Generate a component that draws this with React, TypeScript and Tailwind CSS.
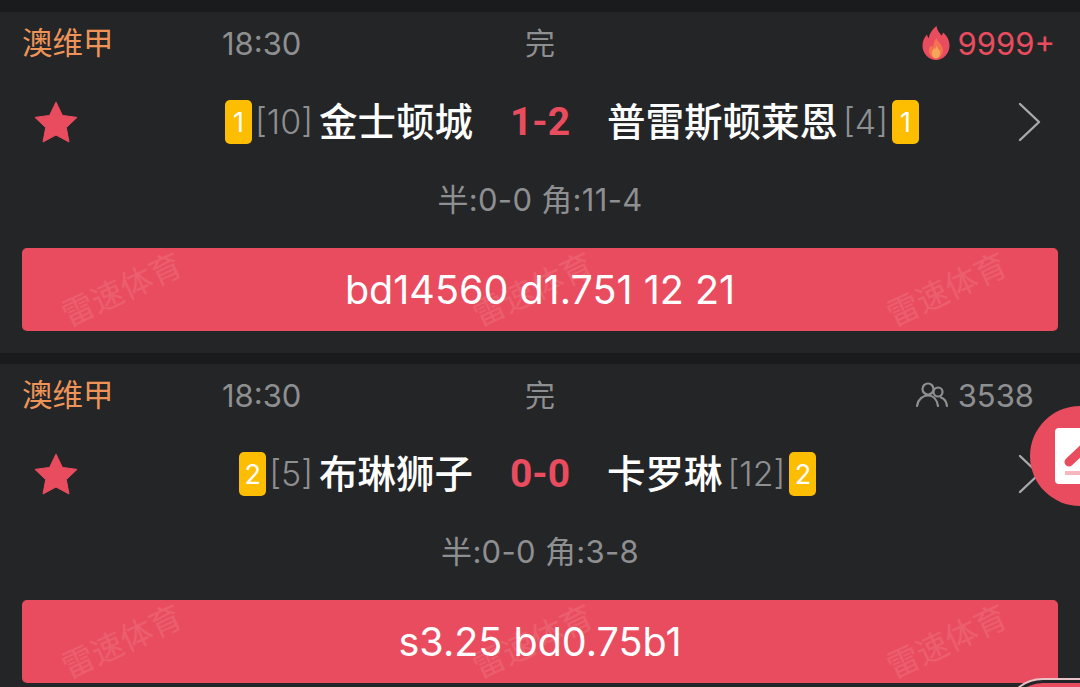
const cjk = "font-['Inter','Noto_Sans_CJK_SC',sans-serif]";

type Match = {
  tag: string;
  heat: "hot" | "people";
  heatText: string;
  homeCards: string;
  homeRank: string;
  home: string;
  score: string;
  away: string;
  awayRank: string;
  awayCards: string;
  stats: string;
  tip: string;
};

const matches: Match[] = [
  {
    tag: "澳维甲",
    heat: "hot",
    heatText: "9999+",
    homeCards: "1",
    homeRank: "[10]",
    home: "金士顿城",
    score: "1-2",
    away: "普雷斯顿莱恩",
    awayRank: "[4]",
    awayCards: "1",
    stats: "半:0-0 角:11-4",
    tip: "bd14560 d1.751 12 21",
  },
  {
    tag: "澳维甲",
    heat: "people",
    heatText: "3538",
    homeCards: "2",
    homeRank: "[5]",
    home: "布琳狮子",
    score: "0-0",
    away: "卡罗琳",
    awayRank: "[12]",
    awayCards: "2",
    stats: "半:0-0 角:3-8",
    tip: "s3.25 bd0.75b1",
  },
];

function Flame() {
  return (
    <svg width="28" height="34" viewBox="0 0 28 34" className="shrink-0">
      <path
        d="M14.5 0c.6 4.5 3 7 5 9.500.8-.8 1.300-1.800 1.500-3 3.800 3 6.500 7.500 6.500 13 0 8-6 14.500-13.500 14.500S.5 27.500.5 19.500c0-4.500 1.800-8 4.500-11 .3 1.500.8 2.800 1.800 3.800C7.500 7.500 10.500 3 14.500 0z"
        fill="#e94c5e"
      />
      <path
        d="M14.500 12c.8 3 3 4.500 5 7.500 1.500 2.200 2 4.500 1.200 7-1 3.500-3.500 6-6.700 6s-5.800-2.500-6.800-5.800c-.8-2.700 0-5.200 2-7.400.3 1 .8 1.800 1.800 2.200.1-3.500 1.300-6.800 3.500-9.500z"
        fill="#f4724f"
      />
      <path
        d="M14.500 20c.8 2 2.200 3 3.200 4.800 1.200 2.500-.5 7.700-3.700 7.700s-5-4.500-3.800-7.200c.5-1.200 1.300-2 1.800-3 .5.500 1 .8 1.300 1 .2-1 .6-2.200 1.200-3.300z"
        fill="#f7a45c"
      />
    </svg>
  );
}

function People() {
  return (
    <svg width="32" height="26" viewBox="0 0 32 26" fill="none" stroke="#8e8f91" strokeWidth="2.200" strokeLinecap="round" className="shrink-0">
      <circle cx="12" cy="7" r="5.500" />
      <circle cx="22" cy="10" r="4.500" />
      <path d="M1 24C2 17 7 13.500 12 13.500c5 0 9 4 10 10.500" />
      <path d="M25 15.500c3 1 5.500 4.500 6 8.500" />
    </svg>
  );
}

function Star() {
  return (
    <svg width="44" height="42" viewBox="0 0 44 42" className="shrink-0">
      <path
        d="M22 1l6.400 13.400 14.600 2-10.700 10.200 2.700 14.400L22 34l-13 7 2.700-14.400L1 16.400l14.600-2z"
        fill="#e94c5e"
        stroke="#e94c5e"
        strokeLinejoin="round"
      />
    </svg>
  );
}

function Chevron() {
  return (
    <svg width="24" height="40" viewBox="0 0 24 40" fill="none" stroke="#a9aaab" strokeWidth="2.400" strokeLinecap="round" strokeLinejoin="round" className="shrink-0">
      <path d="M3 2l19 18L3 38" />
    </svg>
  );
}

function CardBadge({ value }: { value: string }) {
  return (
    <span className="flex h-[44px] w-[27px] shrink-0 items-center justify-center rounded-[5px] bg-[#fdbd00] text-[27px] leading-none text-white">
      {value}
    </span>
  );
}

function Watermark({ className }: { className: string }) {
  return (
    <span className={`absolute top-[26px] rotate-[-25deg] whitespace-nowrap text-[32px] leading-none text-white/10 ${className}`}>
      雷速体育
    </span>
  );
}

function MatchRow({ m }: { m: Match }) {
  return (
    <section className="flex h-[341px] shrink-0 flex-col bg-[#242527] px-[22px]">
      {/* top line: league, kick off, state, heat */}
      <div className="grid h-[62px] shrink-0 grid-cols-[200px_303px_1fr_auto] items-center text-[31px] leading-none">
        <span className="text-[30.5px] text-[#ee9458]">{m.tag}</span>
        <span className="text-[#8e8f91]">18:30</span>
        <span className="text-[30px] text-[#8e8f91]">完</span>
        <span className={`flex items-center ${m.heat === "hot" ? "gap-[8px] pr-[3px] text-[#e94c5e]" : "gap-[10px] pr-[24px] text-[#8e8f91]"}`}>
          {m.heat === "hot" ? <Flame /> : <People />}
          {m.heatText}
        </span>
      </div>

      {/* teams and score */}
      <div className="flex h-[96px] shrink-0 items-center">
        <div className="flex w-[451px] shrink-0 items-center pl-[12px]">
          <Star />
          <span className="ml-auto mr-[3px]">
            <CardBadge value={m.homeCards} />
          </span>
          <span className="mr-[6px] text-[34px] font-light leading-none text-[#8e8f91]">{m.homeRank}</span>
          <span className="text-[38.5px] font-medium leading-none text-white">{m.home}</span>
        </div>
        <span className="w-[134px] shrink-0 text-center font-['Roboto'] text-[39px] font-bold leading-none text-[#e94c5e]">{m.score}</span>
        <div className="flex w-[451px] shrink-0 items-center pr-[17px]">
          <span className="mr-[5px] text-[38.5px] font-medium leading-none text-white">{m.away}</span>
          <span className="mr-[4px] text-[34px] font-light leading-none text-[#8e8f91]">{m.awayRank}</span>
          <CardBadge value={m.awayCards} />
          <span className="ml-auto">
            <Chevron />
          </span>
        </div>
      </div>

      {/* half time and corners */}
      <div className="flex h-[58px] shrink-0 items-center justify-center text-[31px] leading-none tracking-[0.3px] text-[#8e8f91]">
        {m.stats}
      </div>

      {/* tip banner */}
      <div className="relative mt-[20px] flex h-[83px] shrink-0 items-center justify-center rounded-[5px] bg-[#e94c5e] pt-[2px] text-[39.5px] leading-none text-white">
        <span>{m.tip}</span>
        <Watermark className="left-[36px]" />
        <Watermark className="left-[447px]" />
        <Watermark className="left-[861px]" />
      </div>
    </section>
  );
}

export default function App() {
  return (
    <div className={`relative flex h-[687px] w-[1080px] flex-col gap-[11px] overflow-hidden bg-[#1a1b1d] pt-[12px] ${cjk}`}>
      {matches.map((m) => (
        <MatchRow key={m.home} m={m} />
      ))}

      {/* floating compose button */}
      <div className="absolute left-[1030px] top-[406px] flex h-[100px] w-[100px] items-center rounded-full bg-[#e94c5e] pl-[25px]">
        <div className="h-[56px] w-[56px] overflow-hidden rounded-[4px] bg-white">
          <svg width="56" height="56" viewBox="0 0 56 56">
            <path d="M14 34L32 17" stroke="#e94c5e" strokeWidth="9" strokeLinecap="round" fill="none" />
            <rect x="10" y="43" width="46" height="4" fill="#f7b7bf" />
          </svg>
        </div>
      </div>

      {/* next floating button, only its top edge shows */}
      <div className="absolute left-[1003px] top-[678px] h-[80px] w-[160px] rounded-full border-[2px] border-[#e9c3c8] bg-[#242527] p-[3px]">
        <div className="h-full w-full rounded-full bg-[#e94c5e]" />
      </div>
    </div>
  );
}
